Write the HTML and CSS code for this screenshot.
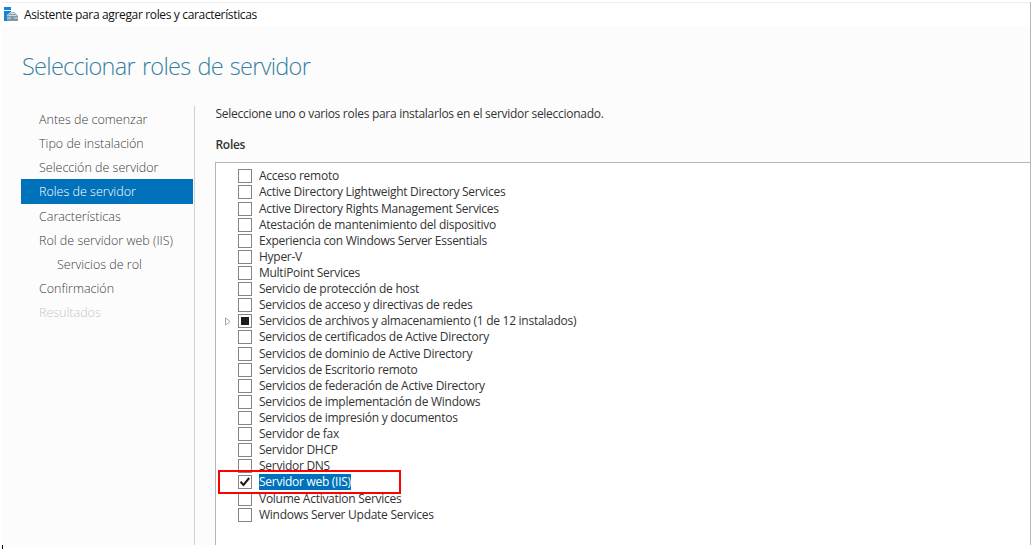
FILE: index.html
```html
<!DOCTYPE html>
<html lang="es">
<head>
<meta charset="utf-8">
<title>Asistente para agregar roles y características</title>
<link rel="stylesheet" href="styles.css">
</head>
<body>
<div class="window">
  <header class="titlebar">
    <svg class="app-icon" width="15" height="15" viewBox="0 0 15 15">
      <path fill="#1684d8" d="M0 0h7v3H0zM0 4h7v1L3 8v6H0z"/>
      <path fill="none" stroke="#7f98aa" d="M6.500 7.500V6.500q0-.8.8-.8h2.900q.8 0 .8.800v1"/>
      <path fill="#7f98aa" d="M3 9l2-2h7l2 2v5H3z"/>
      <path fill="#d3dce2" d="M5 8h7l1 1H4zM3 10.500h4v1H3zM10 10.500h4v1h-4z"/>
    </svg>
    <span>Asistente para agregar roles y características</span>
  </header>
  <main class="body">
    <h1>Seleccionar roles de servidor</h1>
    <div class="columns">
      <nav class="steps">
        <div class="step">Antes de comenzar</div>
        <div class="step">Tipo de instalación</div>
        <div class="step">Selección de servidor</div>
        <div class="step active">Roles de servidor</div>
        <div class="step">Características</div>
        <div class="step">Rol de servidor web (IIS)</div>
        <div class="step sub">Servicios de rol</div>
        <div class="step">Confirmación</div>
        <div class="step disabled">Resultados</div>
      </nav>
      <section class="content">
        <p class="intro">Seleccione uno o varios roles para instalarlos en el servidor seleccionado.</p>
        <h2>Roles</h2>
        <div class="list">
          <div class="role"><i class="box"></i><span>Acceso remoto</span></div>
          <div class="role"><i class="box"></i><span>Active Directory Lightweight Directory Services</span></div>
          <div class="role"><i class="box"></i><span>Active Directory Rights Management Services</span></div>
          <div class="role"><i class="box"></i><span>Atestación de mantenimiento del dispositivo</span></div>
          <div class="role"><i class="box"></i><span>Experiencia con Windows Server Essentials</span></div>
          <div class="role"><i class="box"></i><span>Hyper-V</span></div>
          <div class="role"><i class="box"></i><span>MultiPoint Services</span></div>
          <div class="role"><i class="box"></i><span>Servicio de protección de host</span></div>
          <div class="role"><i class="box"></i><span>Servicios de acceso y directivas de redes</span></div>
          <div class="role"><svg class="expander" width="6" height="9" viewBox="0 0 6 9"><path d="M.5.900v7.200L5 4.500z" fill="#fff" stroke="#aaa"/></svg><i class="box partial"></i><span>Servicios de archivos y almacenamiento (1 de 12 instalados)</span></div>
          <div class="role"><i class="box"></i><span>Servicios de certificados de Active Directory</span></div>
          <div class="role"><i class="box"></i><span>Servicios de dominio de Active Directory</span></div>
          <div class="role"><i class="box"></i><span>Servicios de Escritorio remoto</span></div>
          <div class="role"><i class="box"></i><span>Servicios de federación de Active Directory</span></div>
          <div class="role"><i class="box"></i><span>Servicios de implementación de Windows</span></div>
          <div class="role"><i class="box"></i><span>Servicios de impresión y documentos</span></div>
          <div class="role"><i class="box"></i><span>Servidor de fax</span></div>
          <div class="role"><i class="box"></i><span>Servidor DHCP</span></div>
          <div class="role"><i class="box"></i><span>Servidor DNS</span></div>
          <div class="role selected"><i class="box"><svg width="12" height="12" viewBox="0 0 12 12"><path d="M1.500 5.800l3 3.200 5.700-7" fill="none" stroke="#1c1c1c" stroke-width="2"/></svg></i><span>Servidor web (IIS)</span><b class="highlight"></b></div>
          <div class="role"><i class="box"></i><span>Volume Activation Services</span></div>
          <div class="role"><i class="box"></i><span>Windows Server Update Services</span></div>
        </div>
      </section>
    </div>
  </main>
</div>
<div class="caret"></div>
</body>
</html>
```
FILE: styles.css
```css
* { box-sizing: border-box; }
body {
  margin: 0;
  height: 549px;
  padding: 2px 0 0 2px;
  overflow: hidden;
  background: #fff;
  color: #333;
  font: 12px/16px "Open Sans", "Noto Sans", sans-serif;
}
.window {
  display: flex;
  flex-direction: column;
  height: 543px;
  border-right: 1px solid #b9b9b9;
}
.titlebar {
  display: flex;
  flex: none;
  height: 24px;
  border-top: 1px solid #eee;
  padding: 4px 0 0 2px;
  gap: 5px;
  color: #111;
  font-size: 12px;
  letter-spacing: -0.350px;
}
.app-icon { flex: none; }
.body {
  display: flex;
  flex: 1;
  flex-direction: column;
  min-height: 0;
  background: #fcfcfc;
}
h1 {
  flex: none;
  height: 80px;
  margin: 0;
  padding: 23px 0 0 20px;
  color: #35819f;
  font-size: 23.500px;
  font-weight: 300;
  line-height: 34px;
  letter-spacing: -0.720px;
  word-spacing: 1.600px;
}
.columns {
  display: flex;
  flex: 1;
  min-height: 0;
}
.steps {
  flex: none;
  width: 174px;
  margin: 0 20px 0 19px;
  padding: 1px 1px 0 0;
  border-right: 1px solid #d0d0d0;
}
.step {
  height: 24.150px;
  padding-left: 18px;
  color: #3c3c3c;
  font-size: 12.500px;
  font-weight: 300;
  line-height: 25px;
  white-space: nowrap;
}
.step.active { background: #0072bc; color: #fff; }
.step.sub { padding-left: 36px; }
.step.disabled { color: #c6c6c6; }
.content {
  display: flex;
  flex: 1;
  flex-direction: column;
  min-width: 0;
}
.intro { margin: 0 0 0 .5px; letter-spacing: -0.280px; white-space: nowrap; }
h2 {
  margin: 15px 0 9px .5px;
  font-size: 12px;
  font-weight: 600;
  line-height: 16px;
  letter-spacing: -0.300px;
}
.list {
  flex: 1;
  min-height: 0;
  padding-top: 5.300px;
  border: solid #b5b5b5;
  border-width: 1px 0 0 1px;
  background: #fff;
}
.role {
  position: relative;
  display: flex;
  align-items: center;
  height: 16.120px;
  padding-left: 22px;
  gap: 7px;
  letter-spacing: -0.270px;
  white-space: nowrap;
}
.box {
  display: block;
  flex: none;
  width: 14px;
  height: 14px;
  border: 1px solid #858585;
  background: #fff;
}
.box svg { display: block; }
.partial { padding: 2px; }
.partial::before {
  content: "";
  display: block;
  width: 8px;
  height: 8px;
  background: #1d1d1d;
}
.expander { position: absolute; left: 9px; }
.selected span { background: #0072bc; color: #fff; line-height: 16px; }
.highlight {
  position: absolute;
  z-index: 1;
  left: 2px;
  top: -4px;
  width: 183px;
  height: 24px;
  border: 2px solid #f00;
}
.caret { width: 1px; height: 4px; background: #000; }
```
